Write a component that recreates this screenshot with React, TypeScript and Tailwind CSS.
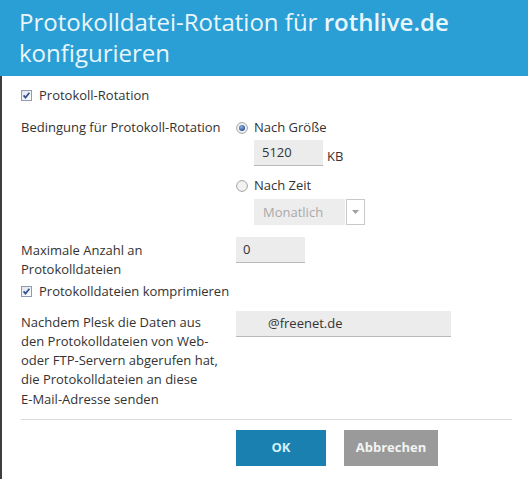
import type { ReactNode } from "react";

function CheckBox() {
  return (
    <svg width="11" height="11" viewBox="0 0 11 11" className="shrink-0">
      <defs>
        <linearGradient id="cbg" x1="0" y1="0" x2="1" y2="1">
          <stop offset="0" stopColor="#dfe4ec" />
          <stop offset="1" stopColor="#ffffff" />
        </linearGradient>
      </defs>
      <rect x="0.5" y="0.5" width="10" height="10" fill="url(#cbg)" stroke="#8e9bb0" />
      <path d="M2.6 5.4 L4.5 7.6 L8.4 2.8" fill="none" stroke="#31508f" strokeWidth="1.7" />
    </svg>
  );
}

function Radio({ checked }: { checked?: boolean }) {
  return (
    <svg width="12" height="12" viewBox="0 0 12 12" className="shrink-0">
      <defs>
        <radialGradient id="rdot" cx="0.4" cy="0.35" r="0.7">
          <stop offset="0" stopColor="#8fb3e4" />
          <stop offset="1" stopColor="#1f4a8c" />
        </radialGradient>
      </defs>
      <circle cx="6" cy="6" r="5.4" fill="#f2f2f2" stroke="#9a9a9a" strokeWidth="0.9" />
      {checked && <circle cx="6" cy="6" r="3" fill="url(#rdot)" />}
    </svg>
  );
}

function Field({ className, children }: { className: string; children: ReactNode }) {
  return (
    <div className={`h-[26px] bg-[#ececec] border-b border-[#b9b9b9] flex items-center ${className}`}>
      {children}
    </div>
  );
}

export default function App() {
  return (
    <div
      className="w-[528px] h-[479px] bg-white overflow-hidden flex flex-col text-[13px] text-[#333]"
      style={{ fontFamily: '"Open Sans", "Noto Sans", sans-serif' }}
    >
      <div className="h-[76px] shrink-0 bg-[#2a9fd5] px-[19px] pt-[6px] text-[24px] leading-[31px] text-[#e9f6fc]">
        Protokolldatei-Rotation für <span className="font-semibold">rothlive.de</span>
        <br />
        konfigurieren
      </div>

      <div className="flex-1 border-l-2 border-[#3f3f3f] pl-[19px] pr-[16px] pt-[10px] leading-[19px]">
        <label className="flex items-center gap-[7px] h-[19px]">
          <CheckBox />
          <span>Protokoll-Rotation</span>
        </label>

        <div className="grid grid-cols-[215px_1fr] mt-[13px]">
          <div>Bedingung für Protokoll-Rotation</div>
          <div>
            <div className="flex items-center gap-[6px] h-[19px]">
              <Radio checked />
              <span>Nach Größe</span>
            </div>
            <div className="flex items-end gap-[4px] mt-[3px] ml-[18px]">
              <Field className="w-[69px] pl-[8px]">5120</Field>
              <span className="leading-[20px]">KB</span>
            </div>
            <div className="flex items-center gap-[6px] h-[19px] mt-[10px]">
              <Radio />
              <span>Nach Zeit</span>
            </div>
            <div className="flex mt-[4px] ml-[18px] h-[26px]">
              <div className="w-[91px] bg-[#ededed] pl-[9px] flex items-center text-[#a9a9a9]">Monatlich</div>
              <div className="w-[19px] ml-[1px] border border-[#c9c9c9] bg-white flex items-center justify-center">
                <svg width="7" height="4" viewBox="0 0 7 4">
                  <path d="M0 0 L7 0 L3.5 4 Z" fill="#a0a0a0" />
                </svg>
              </div>
            </div>
          </div>
        </div>

        <div className="grid grid-cols-[215px_1fr] mt-[12px]">
          <div className="pt-[3.5px]">
            Maximale Anzahl an
            <br />
            Protokolldateien
          </div>
          <div>
            <Field className="w-[69px] pl-[7px]">0</Field>
          </div>
        </div>

        <label className="flex items-center gap-[7px] h-[19px] mt-[3px]">
          <CheckBox />
          <span>Protokolldateien komprimieren</span>
        </label>

        <div className="grid grid-cols-[215px_1fr] mt-[10.5px]">
          <div className="pt-[1.5px] leading-[19.3px]">
            Nachdem Plesk die Daten aus
            <br />
            den Protokolldateien von Web-
            <br />
            oder FTP-Servern abgerufen hat,
            <br />
            die Protokolldateien an diese
            <br />
            E-Mail-Adresse senden
          </div>
          <div>
            <Field className="w-[215px] pl-[32px]">@freenet.de</Field>
          </div>
        </div>

        <div className="mt-[10px] h-px bg-[#dcdcdc]" />

        <div className="flex gap-[18px] mt-[10px] ml-[215px]">
          <button className="w-[90px] h-[36px] bg-[#1a80b0] text-[#d4f0fb] font-bold">OK</button>
          <button className="w-[94px] h-[36px] bg-[#9a9a9a] text-[#f3f3f3] font-bold">Abbrechen</button>
        </div>
      </div>
    </div>
  );
}
